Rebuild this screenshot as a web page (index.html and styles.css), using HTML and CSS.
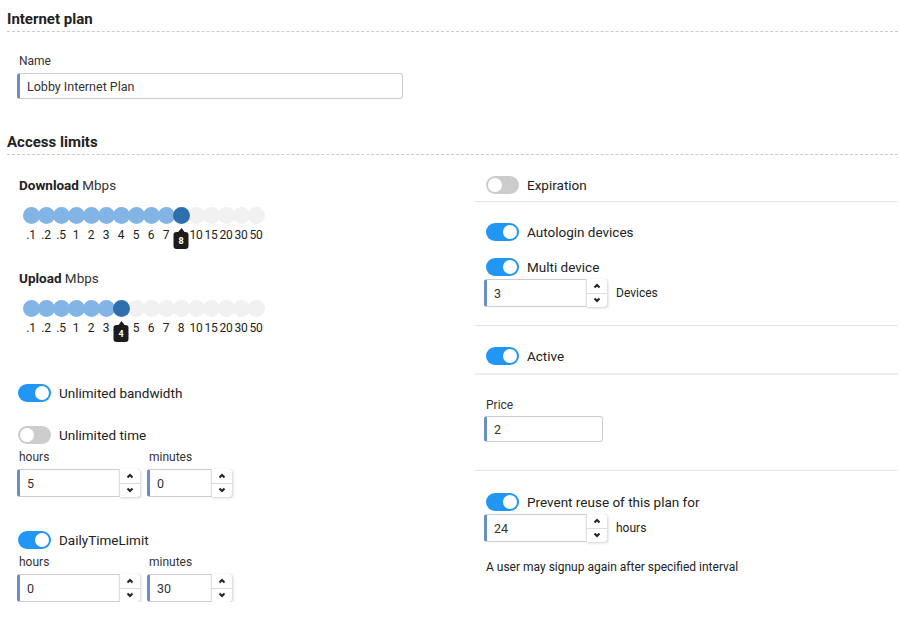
FILE: index.html
```html
<!DOCTYPE html>
<html lang="en">
<head>
    <meta charset="UTF-8">
    <meta name="viewport" content="width=device-width, initial-scale=1.0">
    <title>Internet plan</title>
    <link rel="stylesheet" href="styles.css">
</head>
<body>
<div class="page">
    <h3 class="section-title">Internet plan</h3>
    <div class="name-field">
        <div class="field-label">Name</div>
        <div class="text-input name-input"><span class="value">Lobby Internet Plan</span></div>
    </div>

    <h3 class="section-title">Access limits</h3>

    <div class="columns">
        <!-- left: speeds and time limits -->
        <div class="col col-left">
            <div class="rate-label"><strong>Download</strong> Mbps</div>
            <div class="slider">
                <div class="dots">
                    <span class="dot on"></span><span class="dot on"></span><span class="dot on"></span><span class="dot on"></span>
                    <span class="dot on"></span><span class="dot on"></span><span class="dot on"></span><span class="dot on"></span>
                    <span class="dot on"></span><span class="dot on"></span>
                    <span class="dot current"><span class="tip">8</span></span>
                    <span class="dot"></span><span class="dot"></span><span class="dot"></span><span class="dot"></span><span class="dot"></span>
                </div>
                <div class="ticks">
                    <span>.1</span><span>.2</span><span>.5</span><span>1</span><span>2</span><span>3</span><span>4</span><span>5</span>
                    <span>6</span><span>7</span><span>8</span><span>10</span><span>15</span><span>20</span><span>30</span><span>50</span>
                </div>
            </div>

            <div class="rate-label upload-label"><strong>Upload</strong> Mbps</div>
            <div class="slider">
                <div class="dots">
                    <span class="dot on"></span><span class="dot on"></span><span class="dot on"></span><span class="dot on"></span>
                    <span class="dot on"></span><span class="dot on"></span>
                    <span class="dot current"><span class="tip">4</span></span>
                    <span class="dot"></span><span class="dot"></span><span class="dot"></span><span class="dot"></span><span class="dot"></span>
                    <span class="dot"></span><span class="dot"></span><span class="dot"></span><span class="dot"></span>
                </div>
                <div class="ticks">
                    <span>.1</span><span>.2</span><span>.5</span><span>1</span><span>2</span><span>3</span><span>4</span><span>5</span>
                    <span>6</span><span>7</span><span>8</span><span>10</span><span>15</span><span>20</span><span>30</span><span>50</span>
                </div>
            </div>

            <div class="switch-row bandwidth-row">
                <span class="switch checked"></span><span>Unlimited bandwidth</span>
            </div>
            <div class="switch-row time-row">
                <span class="switch"></span><span>Unlimited time</span>
            </div>
            <div class="time-fields">
                <div class="time-field">
                    <div class="field-label">hours</div>
                    <div class="num-input hours-input">
                        <span class="value">5</span>
                        <span class="spin">
                            <span class="spin-btn"><svg width="8" height="6" viewBox="0 0 8 6"><path d="M1.5 4.5 L4 2 L6.5 4.5" /></svg></span>
                            <span class="spin-btn"><svg width="8" height="6" viewBox="0 0 8 6"><path d="M1.5 1.5 L4 4 L6.5 1.5" /></svg></span>
                        </span>
                    </div>
                </div>
                <div class="time-field">
                    <div class="field-label">minutes</div>
                    <div class="num-input minutes-input">
                        <span class="value">0</span>
                        <span class="spin">
                            <span class="spin-btn"><svg width="8" height="6" viewBox="0 0 8 6"><path d="M1.5 4.5 L4 2 L6.5 4.5" /></svg></span>
                            <span class="spin-btn"><svg width="8" height="6" viewBox="0 0 8 6"><path d="M1.5 1.5 L4 4 L6.5 1.5" /></svg></span>
                        </span>
                    </div>
                </div>
            </div>

            <div class="switch-row daily-row">
                <span class="switch checked"></span><span>DailyTimeLimit</span>
            </div>
            <div class="time-fields">
                <div class="time-field">
                    <div class="field-label">hours</div>
                    <div class="num-input hours-input">
                        <span class="value">0</span>
                        <span class="spin">
                            <span class="spin-btn"><svg width="8" height="6" viewBox="0 0 8 6"><path d="M1.5 4.5 L4 2 L6.5 4.5" /></svg></span>
                            <span class="spin-btn"><svg width="8" height="6" viewBox="0 0 8 6"><path d="M1.5 1.5 L4 4 L6.5 1.5" /></svg></span>
                        </span>
                    </div>
                </div>
                <div class="time-field">
                    <div class="field-label">minutes</div>
                    <div class="num-input minutes-input">
                        <span class="value">30</span>
                        <span class="spin">
                            <span class="spin-btn"><svg width="8" height="6" viewBox="0 0 8 6"><path d="M1.5 4.5 L4 2 L6.5 4.5" /></svg></span>
                            <span class="spin-btn"><svg width="8" height="6" viewBox="0 0 8 6"><path d="M1.5 1.5 L4 4 L6.5 1.5" /></svg></span>
                        </span>
                    </div>
                </div>
            </div>
        </div>

        <!-- right: flags, price, reuse -->
        <div class="col col-right">
            <div class="block expiration-block">
                <div class="switch-row">
                    <span class="switch"></span><span>Expiration</span>
                </div>
            </div>

            <div class="block devices-block">
                <div class="switch-row">
                    <span class="switch checked"></span><span>Autologin devices</span>
                </div>
                <div class="switch-row multi-row">
                    <span class="switch checked"></span><span>Multi device</span>
                </div>
                <div class="inline-field">
                    <div class="num-input hours-input">
                        <span class="value">3</span>
                        <span class="spin">
                            <span class="spin-btn"><svg width="8" height="6" viewBox="0 0 8 6"><path d="M1.5 4.5 L4 2 L6.5 4.5" /></svg></span>
                            <span class="spin-btn"><svg width="8" height="6" viewBox="0 0 8 6"><path d="M1.5 1.5 L4 4 L6.5 1.5" /></svg></span>
                        </span>
                    </div>
                    <span class="unit">Devices</span>
                </div>
            </div>

            <div class="block active-block">
                <div class="switch-row">
                    <span class="switch checked"></span><span>Active</span>
                </div>
            </div>

            <div class="block price-block">
                <div class="field-label">Price</div>
                <div class="text-input price-input"><span class="value">2</span></div>
            </div>

            <div class="block reuse-block">
                <div class="switch-row">
                    <span class="switch checked"></span><span>Prevent reuse of this plan for</span>
                </div>
                <div class="inline-field reuse-field">
                    <div class="num-input hours-input">
                        <span class="value">24</span>
                        <span class="spin">
                            <span class="spin-btn"><svg width="8" height="6" viewBox="0 0 8 6"><path d="M1.5 4.5 L4 2 L6.5 4.5" /></svg></span>
                            <span class="spin-btn"><svg width="8" height="6" viewBox="0 0 8 6"><path d="M1.5 1.5 L4 4 L6.5 1.5" /></svg></span>
                        </span>
                    </div>
                    <span class="unit">hours</span>
                </div>
                <p class="hint">A user may signup again after specified interval</p>
            </div>
        </div>
    </div>
</div>
</body>
</html>
```

FILE: styles.css
```css
body {
    margin: 0;
    font-family: Roboto, "Liberation Sans", Arial, sans-serif;
    color: #333;
    background: #fff;
}
.page {
    padding: 9px 2px 0 7px;
}
.section-title {
    margin: 0;
    font-size: 15px;
    line-height: 18px;
    font-weight: bold;
    color: #222;
    padding-top: 1px;
    padding-bottom: 3px;
    border-bottom: 1px dashed #ccc;
}
.name-field {
    padding: 21px 0 33px 10px;
}
.field-label {
    font-size: 12px;
    line-height: 16px;
    margin: 0 0 4px 2px;
    color: #333;
}
.text-input,
.num-input {
    box-sizing: border-box;
    display: flex;
    align-items: center;
    border: 1px solid #ccc;
    border-left: 3px solid #6a8ec3;
    border-radius: 3px;
    background: #fff;
    font-size: 12.5px;
    color: #333;
}
.text-input .value,
.num-input .value {
    flex: 1;
    padding-left: 7px;
}
.name-input {
    width: 386px;
    height: 26px;
}
.price-input {
    width: 119px;
    height: 26px;
}
.num-input {
    height: 28px;
    align-items: stretch;
}
.num-input .value {
    display: flex;
    align-items: center;
}
.hours-input {
    width: 123px;
}
.minutes-input {
    width: 85px;
}
.spin {
    width: 20px;
    display: flex;
    flex-direction: column;
    border-left: 1px solid #ddd;
    margin: -1px -1px -1px 0;
    border-radius: 0 3px 3px 0;
    box-shadow: 1px 1px 3px rgba(0, 0, 0, 0.18);
    background: #fff;
}
.spin-btn {
    flex: 1;
    display: flex;
    align-items: center;
    justify-content: center;
}
.spin-btn + .spin-btn {
    border-top: 1px solid #ddd;
}
.spin-btn svg path {
    fill: none;
    stroke: #222;
    stroke-width: 2;
}

.columns {
    display: grid;
    grid-template-columns: 468px 1fr;
}
.col-left {
    padding-left: 10px;
}
.rate-label {
    font-size: 13.5px;
    line-height: 16px;
    margin: 22px 0 0 2px;
    color: #333;
}
.rate-label strong {
    color: #222;
}
.upload-label {
    margin-top: 28px;
}

/* stepped slider */
.slider {
    margin: 14px 0 0 5.5px;
}
.dots {
    display: flex;
}
.dot {
    position: relative;
    width: 17px;
    height: 17px;
    border-radius: 50%;
    background: #f1f1f1;
    margin-right: -2px;
    flex: none;
}
.dot.on {
    background: #82b5e6;
}
.dot.current {
    background: #2f6fad;
    z-index: 2;
}
.tip {
    position: absolute;
    top: 25px;
    left: 50%;
    transform: translateX(-50%);
    width: 15px;
    height: 17px;
    border-radius: 3px;
    background: #1c1c1c;
    color: #fff;
    font-size: 9px;
    font-weight: bold;
    line-height: 18px;
    text-align: center;
}
.tip::before {
    content: "";
    position: absolute;
    top: -4px;
    left: 50%;
    margin-left: -3px;
    border: 3px solid transparent;
    border-top: 0;
    border-bottom: 4px solid #1c1c1c;
}
.ticks {
    display: flex;
    margin-top: 4px;
    padding-left: 1px;
}
.ticks span {
    width: 15px;
    flex: none;
    text-align: center;
    font-size: 12px;
    line-height: 14px;
    color: #222;
    letter-spacing: -0.3px;
}

/* toggle switches */
.switch-row {
    display: flex;
    align-items: center;
    font-size: 13.5px;
    line-height: 18px;
    color: #222;
    margin-left: 1px;
}
.switch {
    position: relative;
    width: 33px;
    height: 18px;
    border-radius: 9px;
    background: #ccc;
    margin-right: 8px;
    flex: none;
}
.switch::after {
    content: "";
    position: absolute;
    top: 2px;
    left: 2px;
    width: 14px;
    height: 14px;
    border-radius: 50%;
    background: #fff;
}
.switch.checked {
    background: #2196f3;
}
.switch.checked::after {
    left: 17px;
}
.bandwidth-row {
    margin-top: 49px;
}
.time-row {
    margin-top: 24px;
}
.daily-row {
    margin-top: 34px;
}
.time-fields {
    display: flex;
    gap: 7px;
    margin-top: 5px;
}
.time-field .field-label {
    margin-bottom: 4px;
}

/* right column */
.block {
    padding-left: 9px;
    border-bottom: 1px solid #e6e6e6;
}
.block .switch-row {
    margin-left: 2px;
}
.block .field-label {
    margin-left: 2px;
}
.expiration-block {
    padding-top: 21px;
    padding-bottom: 7px;
}
.devices-block {
    padding-top: 21px;
    padding-bottom: 18px;
}
.multi-row {
    margin-top: 17px;
}
.inline-field {
    display: flex;
    align-items: center;
    margin-top: 3px;
}
.unit {
    font-size: 12px;
    color: #222;
    margin-left: 9px;
}
.active-block {
    padding-top: 21px;
    padding-bottom: 8px;
    border-bottom-width: 2px;
    border-bottom-color: #ececec;
}
.price-block {
    padding-top: 22px;
    padding-bottom: 28px;
}
.price-block .field-label {
    margin-bottom: 3px;
}
.reuse-block {
    padding-top: 22px;
    border-bottom: 0;
}
.hint {
    margin: 17px 0 0 2px;
    font-size: 12px;
    line-height: 16px;
    color: #222;
}
```
